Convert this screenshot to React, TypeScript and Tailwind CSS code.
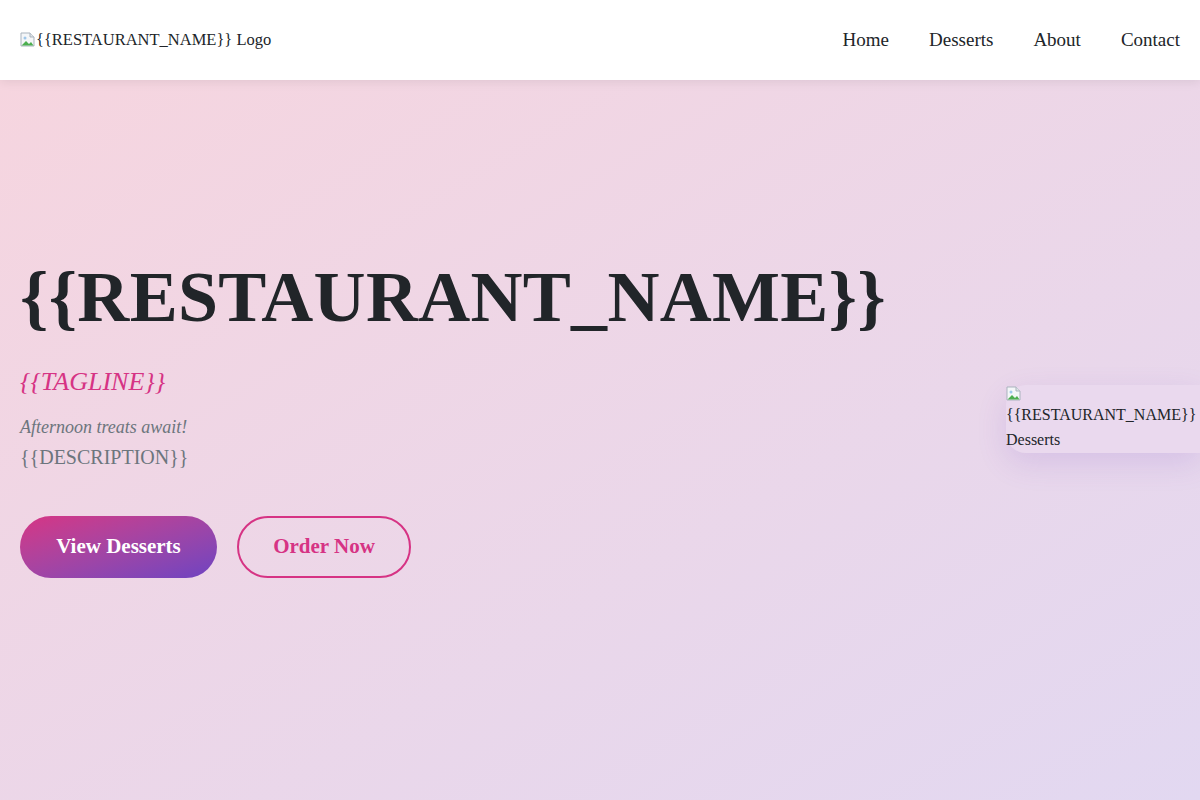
import React from 'react';

const navItems = ['Home', 'Desserts', 'About', 'Contact'];

function BrokenImage() {
  return (
    <svg width="16" height="16" viewBox="0 0 16 16" className="block shrink-0">
      <path d="M1 1h9l4 4v9H1z" fill="#f4f6f8" stroke="#a9b3bd" strokeWidth="1" />
      <path d="M10 1v4h4" fill="#dfe4e8" stroke="#a9b3bd" strokeWidth="1" />
      <path d="M1.5 13.5 6 9l3 3 2-2 2.5 3.5z" fill="#4caf50" />
      <circle cx="5" cy="6" r="1.5" fill="#9ec7ea" />
    </svg>
  );
}

export default function App() {
  return (
    <div className="min-h-screen font-['Liberation_Serif',serif] text-[#212529]">
      {/* Header */}
      <header className="relative z-10 flex h-20 items-center justify-between bg-white px-5 shadow-[0_2px_10px_rgba(0,0,0,0.08)]">
        <a href="#" className="flex items-center text-[16.5px] text-[#212529]">
          <BrokenImage />
          <span>{'{{RESTAURANT_NAME}}'} Logo</span>
        </a>
        <nav className="flex items-center gap-10">
          {navItems.map((item) => (
            <a key={item} href="#" className="text-[19px] text-[#212529]">
              {item}
            </a>
          ))}
        </nav>
      </header>

      {/* Hero */}
      <section className="flex h-[720px] items-center justify-between overflow-hidden bg-gradient-to-br from-[#f6d5df] to-[#e2d8f1] pl-5">
        <div className="mb-[42px] flex flex-col">
          <h1 className="text-[72px] font-bold leading-none tracking-[0.3px] text-[#212529]">
            {'{{RESTAURANT_NAME}}'}
          </h1>
          <p className="mt-[29px] text-[26px] italic text-[#d63384]">{'{{TAGLINE}}'}</p>
          <p className="mt-[13px] text-[18px] italic text-[#6c757d]">Afternoon treats await!</p>
          <p className="mt-px text-[20px] text-[#6c757d]">{'{{DESCRIPTION}}'}</p>
          <div className="mt-[44px] flex gap-5">
            <button className="h-[62px] w-[197px] rounded-full bg-gradient-to-br from-[#d63384] to-[#6f42c1] text-[21px] font-bold text-white">
              View Desserts
            </button>
            <button className="h-[62px] w-[174px] rounded-full border-2 border-[#d63384] text-[21px] font-bold text-[#d63384]">
              Order Now
            </button>
          </div>
        </div>

        <div className="mb-[42px] w-[194px] shrink-0 rounded-l-[20px] bg-[#ead9ee] py-px text-[16px] leading-[25px] text-[#212529] shadow-[0_10px_30px_rgba(111,66,193,0.15)]">
          <BrokenImage />
          <div>{'{{RESTAURANT_NAME}}'}</div>
          <div>Desserts</div>
        </div>
      </section>
    </div>
  );
}
